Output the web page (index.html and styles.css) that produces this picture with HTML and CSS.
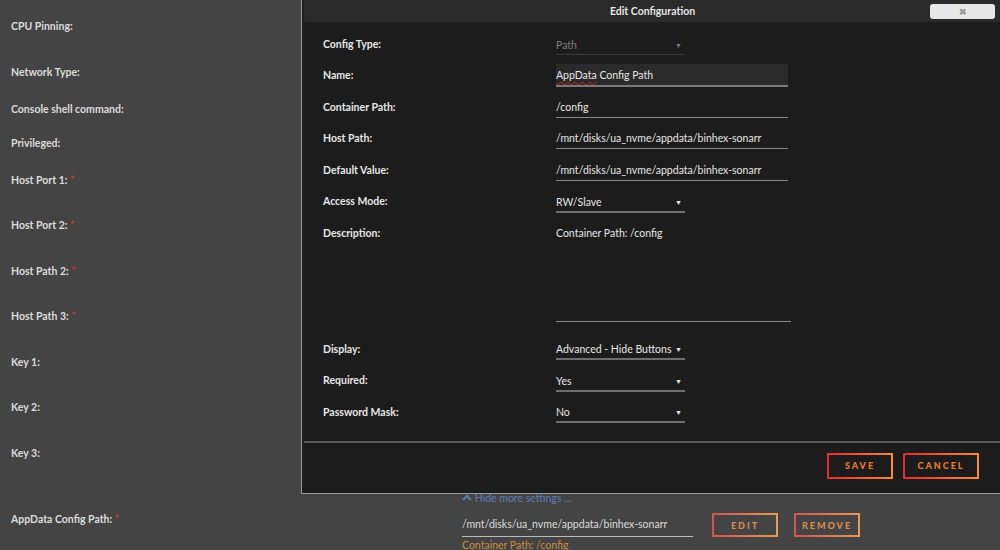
FILE: index.html
```html
<!DOCTYPE html>
<html lang="en">
<head>
    <meta charset="UTF-8">
    <title>Edit Configuration</title>
    <link rel="stylesheet" href="styles.css">
</head>
<body>

    <!-- container settings page behind the popup -->
    <div class="page">
        <div class="row">CPU Pinning:</div>
        <div class="row short">Network Type:</div>
        <div class="row shorter">Console shell command:</div>
        <div class="row short">Privileged:</div>
        <div class="row">Host Port 1: <span class="req">*</span></div>
        <div class="row">Host Port 2: <span class="req">*</span></div>
        <div class="row">Host Path 2: <span class="req">*</span></div>
        <div class="row">Host Path 3: <span class="req">*</span></div>
        <div class="row">Key 1:</div>
        <div class="row">Key 2:</div>
        <div class="row">Key 3:</div>

        <div class="more">
            <svg width="10" height="8" viewBox="0 0 10 8"><path d="M1 6 L5 2 L9 6" fill="none" stroke="#5b7db3" stroke-width="2"/></svg>
            Hide more settings ...
        </div>

        <div class="path-row">
            <div class="path-label">AppData Config Path: <span class="req">*</span></div>
            <div class="path-value">/mnt/disks/ua_nvme/appdata/binhex-sonarr</div>
            <button class="btn dim edit">EDIT</button>
            <button class="btn dim remove">REMOVE</button>
        </div>
        <div class="path-desc">Container Path: /config</div>
    </div>

    <!-- popup -->
    <div class="dialog">
        <div class="dialog-title">
            Edit Configuration
            <span class="close">&#10006;</span>
        </div>

        <div class="dialog-body">
            <div class="field">
                <label>Config Type:</label>
                <div class="select muted">Path<span class="arrow">&#9660;</span></div>
            </div>
            <div class="field">
                <label>Name:</label>
                <div class="input focus"><span class="spell">AppData</span> Config Path</div>
            </div>
            <div class="field">
                <label>Container Path:</label>
                <div class="input">/config</div>
            </div>
            <div class="field">
                <label>Host Path:</label>
                <div class="input">/mnt/disks/ua_nvme/appdata/binhex-sonarr</div>
            </div>
            <div class="field">
                <label>Default Value:</label>
                <div class="input">/mnt/disks/ua_nvme/appdata/binhex-sonarr</div>
            </div>
            <div class="field">
                <label>Access Mode:</label>
                <div class="select">RW/Slave<span class="arrow">&#9660;</span></div>
            </div>
            <div class="field tall">
                <label>Description:</label>
                <div class="textarea">Container Path: /config</div>
            </div>
            <div class="field">
                <label>Display:</label>
                <div class="select">Advanced - Hide Buttons<span class="arrow">&#9660;</span></div>
            </div>
            <div class="field">
                <label>Required:</label>
                <div class="select">Yes<span class="arrow">&#9660;</span></div>
            </div>
            <div class="field">
                <label>Password Mask:</label>
                <div class="select">No<span class="arrow">&#9660;</span></div>
            </div>
        </div>

        <div class="dialog-foot">
            <button class="btn save">SAVE</button>
            <button class="btn cancel">CANCEL</button>
        </div>
    </div>

</body>
</html>
```

FILE: styles.css
```css
body {
    margin: 0;
    background-color: #444;
    font-family: Lato, sans-serif;
    font-size: 10.5px;
    color: #dcdcdc;
    overflow: hidden;
}
.page {
    padding: 18px 0 0 11px;
}
.row {
    height: 45.5px;
    line-height: 16px;
    font-weight: 700;
}
.row.short { height: 37px; }
.row.shorter { height: 34px; }
.req { color: #c0392b; }

.more {
    margin-left: 451px;
    color: #5b7db3;
    height: 16px;
    line-height: 16px;
}
.path-row {
    display: flex;
    align-items: flex-start;
    height: 31px;
}
.path-label {
    width: 451px;
    margin-top: 5px;
    line-height: 16px;
    font-weight: 700;
}
.path-value {
    width: 231px;
    border-bottom: 1px solid #bbb;
    height: 24px;
    line-height: 24px;
    margin-top: 6px;
}
.path-desc {
    margin-left: 451px;
    color: #c98d3a;
    line-height: 16px;
}

/* buttons with the red to orange border */
.btn {
    font-family: Lato, sans-serif;
    font-size: 9px;
    font-weight: 900;
    letter-spacing: 2px;
    color: #f07a2c;
    background: transparent;
    border: 2px solid;
    border-image: linear-gradient(90deg, #e22c2c, #ff8b2d) 1;
    height: 26px;
    padding: 0;
    cursor: pointer;
}
.btn.dim {
    color: #d98b4c;
    border-image: linear-gradient(90deg, #d7534c, #e89a55) 1;
    height: 24px;
    margin-top: 7px;
}
.edit { width: 66px; margin-left: 19px; }
.remove { width: 66px; margin-left: 16px; }
.save { width: 66px; }
.cancel { width: 76px; margin-left: 10px; }

/* popup */
.dialog {
    position: absolute;
    left: 301px;
    top: 0;
    width: 700px;
    height: 494px;
    background-color: #1c1c1c;
    border-left: 1px solid #999;
    border-bottom: 1px solid #999;
    padding: 0 0 0 1px;
    box-sizing: border-box;
    color: #e6e6e6;
}
.dialog-title {
    position: relative;
    height: 22px;
    line-height: 22px;
    background-color: #2a2a2a;
    border-radius: 0 0 3px 3px;
    text-align: center;
    font-weight: 700;
    margin-left: 1px;
}
.close {
    position: absolute;
    right: 6px;
    top: 4px;
    width: 65px;
    height: 15px;
    line-height: 15px;
    background-color: #e8e8e8;
    border-radius: 3px;
    color: #9a9a9a;
    font-size: 9px;
}
.dialog-body {
    padding: 6px 0 0 20px;
}
.field {
    display: grid;
    grid-template-columns: 233px 1fr;
    align-items: center;
    height: 31.5px;
}
.field label {
    font-weight: 700;
}
.field.tall {
    height: 116px;
    align-items: start;
}
.field.tall label {
    padding-top: 8px;
    line-height: 16px;
}
.input {
    width: 232px;
    height: 21px;
    line-height: 23px;
    border-bottom: 1px solid #8a8a8a;
}
.input.focus {
    background-color: #2a2a2a;
    border-bottom: 2px solid #7a7a7a;
}
.spell {
    text-decoration: underline wavy #d02020;
    text-decoration-thickness: 1px;
    text-underline-offset: 2px;
}
.select {
    position: relative;
    width: 129px;
    height: 21px;
    line-height: 24px;
    border-bottom: 2px solid #6e6e6e;
}
.select.muted {
    color: #7a7a7a;
    border-bottom: 1px solid #3c3c3c;
}
.arrow {
    position: absolute;
    right: 3px;
    top: 0;
    font-size: 7px;
}
.textarea {
    width: 235px;
    height: 96px;
    padding-top: 8px;
    line-height: 16px;
    border-bottom: 1px solid #8a8a8a;
}
.dialog-foot {
    margin-top: 13px;
    border-top: 2px solid #5a5a5a;
    margin-left: 1px;
    display: flex;
    justify-content: flex-end;
    padding: 10px 22px 0 0;
}
```
